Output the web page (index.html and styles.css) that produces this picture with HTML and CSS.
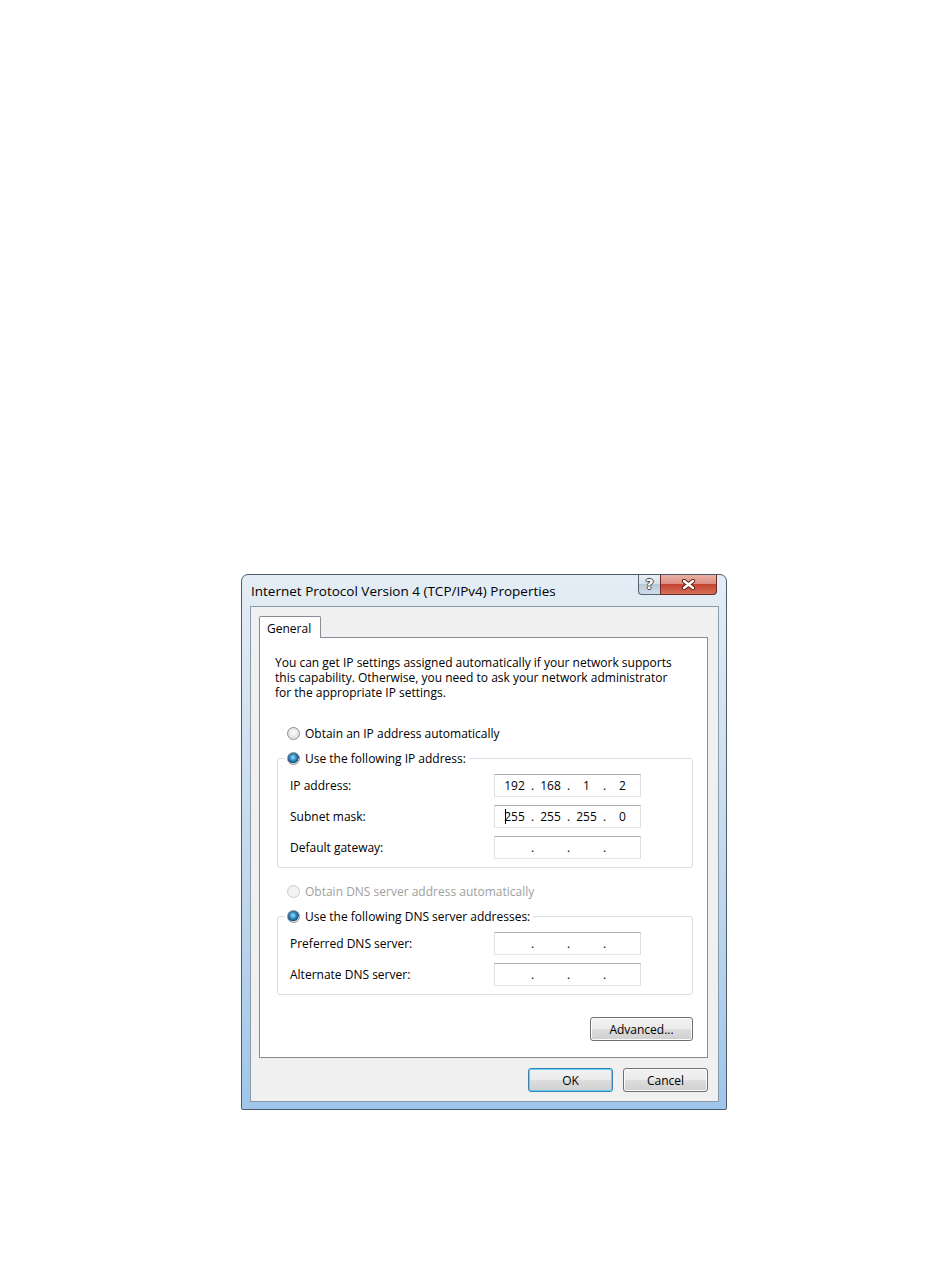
FILE: index.html
```html
<!DOCTYPE html>
<html lang="en">
<head>
    <meta charset="UTF-8">
    <title>Internet Protocol Version 4 (TCP/IPv4) Properties</title>
    <link rel="stylesheet" href="styles.css">
</head>
<body>
    <div class="window">
        <div class="titlebar">
            <span class="title">Internet Protocol Version 4 (TCP/IPv4) Properties</span>
            <div class="caption-buttons">
                <span class="cap-btn help">?</span>
                <span class="cap-btn close">
                    <svg width="15" height="11" viewBox="0 0 15 11">
                        <path d="M3 2 L12 9 M12 2 L3 9" stroke="#5a1d16" stroke-width="4.2" stroke-linecap="round"/>
                        <path d="M3 2 L12 9 M12 2 L3 9" stroke="#fff" stroke-width="2.4" stroke-linecap="round"/>
                    </svg>
                </span>
            </div>
        </div>

        <div class="client">
            <div class="tabs">
                <div class="tab active">General</div>
            </div>

            <div class="panel">
                <p class="intro">You can get IP settings assigned automatically if your network supports<br>this capability. Otherwise, you need to ask your network administrator<br>for the appropriate IP settings.</p>

                <div class="radio"><span class="radio-dot"></span>Obtain an IP address automatically</div>

                <fieldset class="group">
                    <legend><span class="radio"><span class="radio-dot checked"></span>Use the following IP address:</span></legend>
                    <div class="field">
                        <span class="field-label">IP address:</span>
                        <div class="ip-box">
                            <span class="seg">192</span><span class="dot">.</span><span class="seg">168</span><span class="dot">.</span><span class="seg">1</span><span class="dot">.</span><span class="seg">2</span>
                        </div>
                    </div>
                    <div class="field">
                        <span class="field-label">Subnet mask:</span>
                        <div class="ip-box">
                            <span class="seg caret">255</span><span class="dot">.</span><span class="seg">255</span><span class="dot">.</span><span class="seg">255</span><span class="dot">.</span><span class="seg">0</span>
                        </div>
                    </div>
                    <div class="field">
                        <span class="field-label">Default gateway:</span>
                        <div class="ip-box">
                            <span class="seg"></span><span class="dot">.</span><span class="seg"></span><span class="dot">.</span><span class="seg"></span><span class="dot">.</span><span class="seg"></span>
                        </div>
                    </div>
                </fieldset>

                <div class="radio disabled"><span class="radio-dot"></span>Obtain DNS server address automatically</div>

                <fieldset class="group">
                    <legend><span class="radio"><span class="radio-dot checked"></span>Use the following DNS server addresses:</span></legend>
                    <div class="field">
                        <span class="field-label">Preferred DNS server:</span>
                        <div class="ip-box">
                            <span class="seg"></span><span class="dot">.</span><span class="seg"></span><span class="dot">.</span><span class="seg"></span><span class="dot">.</span><span class="seg"></span>
                        </div>
                    </div>
                    <div class="field">
                        <span class="field-label">Alternate DNS server:</span>
                        <div class="ip-box">
                            <span class="seg"></span><span class="dot">.</span><span class="seg"></span><span class="dot">.</span><span class="seg"></span><span class="dot">.</span><span class="seg"></span>
                        </div>
                    </div>
                </fieldset>

                <div class="panel-actions">
                    <button class="btn advanced">Advanced...</button>
                </div>
            </div>

            <div class="dialog-actions">
                <button class="btn default">OK</button>
                <button class="btn">Cancel</button>
            </div>
        </div>
    </div>
</body>
</html>
```

FILE: styles.css
```css
* {
    box-sizing: border-box;
}

body {
    margin: 0;
    background-color: #fff;
    font-family: "Open Sans", "Noto Sans", sans-serif;
    font-size: 12px;
    color: #000;
}

/* window frame */
.window {
    width: 486px;
    height: 536px;
    margin: 574px 0 0 241px;
    padding: 0 7px 7px 8px;
    border: 1px solid #4c5b6b;
    border-radius: 7px 7px 2px 2px;
    background: linear-gradient(to bottom, #e4edf5 0%, #d3e2f0 30%, #b9d3ec 70%, #9fc6ea 100%);
}

.titlebar {
    display: flex;
    height: 31px;
}

.title {
    padding: 7px 0 0 1px;
    font-size: 13.5px;
    color: #000;
}

.caption-buttons {
    display: flex;
    margin-left: auto;
    margin-right: 2px;
    height: 20px;
}

.cap-btn {
    display: flex;
    align-items: center;
    justify-content: center;
    height: 20px;
    border: 1px solid #56626f;
    border-top: none;
}

.help {
    width: 22px;
    padding-bottom: 1px;
    border-radius: 0 0 0 4px;
    border-right: none;
    background: linear-gradient(to bottom, #e9eff5 0%, #d6e0eb 45%, #b9c8d8 50%, #cfdcea 100%);
    color: #fff;
    font-family: "DejaVu Sans", sans-serif;
    font-weight: bold;
    font-size: 14px;
    line-height: 1;
    text-shadow: -1px 0 #3f4a55, 1px 0 #3f4a55, 0 -1px #3f4a55, 0 1px #3f4a55;
}

.close {
    width: 57px;
    border-radius: 0 0 4px 0;
    border-color: #6b2b22;
    background: linear-gradient(to bottom, #eab0a6 0%, #dc8f82 45%, #c5432f 50%, #d4705c 100%);
}

/* client area */
.client {
    height: 496px;
    padding: 9px 10px 9px 8px;
    border: 1px solid #8b9aa9;
    background-color: #f0f0f0;
}

.tabs {
    display: flex;
    height: 21px;
}

.tab {
    width: 62px;
    height: 22px;
    padding: 3px 0 0 7px;
    border: 1px solid #898c95;
    border-bottom: none;
    border-radius: 2px 2px 0 0;
    background-color: #fff;
    position: relative;
    z-index: 1;
}

.panel {
    height: 421px;
    padding: 17px 14px 0 15px;
    border: 1px solid #898c95;
    background-color: #fff;
}

.intro {
    margin: 0 0 25px;
    line-height: 15px;
}

/* radio buttons */
.radio {
    display: flex;
    align-items: center;
    height: 17px;
    padding-left: 12px;
    white-space: nowrap;
}

legend .radio {
    padding-left: 0;
}

.radio-dot {
    width: 13px;
    height: 13px;
    margin-right: 5px;
    border: 1px solid #8c8f93;
    border-radius: 50%;
    background: radial-gradient(circle at 50% 40%, #fdfdfd 0%, #e6e6e6 55%, #cfd1d3 100%);
    flex-shrink: 0;
}

.radio-dot.checked {
    background:
        radial-gradient(circle at 45% 40%, #9edcf7 0%, #2b83bd 40%, #0d4f80 62%, transparent 66%),
        radial-gradient(circle at 50% 40%, #fdfdfd 0%, #e6e6e6 55%, #cfd1d3 100%);
}

.radio.disabled {
    margin-top: 15px;
    color: #a0a0a0;
}

.radio.disabled .radio-dot {
    border-color: #c9cbcd;
    background: #f3f3f3;
}

/* group boxes */
.group {
    margin: 8px 0 0 2px;
    padding: 7px 10px 8px 7px;
    border: 1px solid #d5dfe5;
    border-radius: 3px;
}

.group legend {
    padding: 0 3px 0 2px;
}

.field {
    display: flex;
    align-items: center;
    height: 23px;
    padding-left: 5px;
}

.field + .field {
    margin-top: 8px;
}

.field-label {
    width: 204px;
}

.ip-box {
    display: flex;
    align-items: center;
    width: 147px;
    height: 23px;
    padding-left: 5px;
    border: 1px solid #dbdfe6;
    border-top-color: #abadb3;
    border-bottom-color: #e3e9ef;
    background-color: #fff;
}

.seg {
    width: 29px;
    text-align: center;
    position: relative;
}

.seg.caret::before {
    content: "";
    position: absolute;
    left: 5px;
    top: 1px;
    height: 15px;
    border-left: 1px solid #000;
}

.dot {
    width: 7px;
    text-align: center;
}

/* buttons */
.btn {
    height: 24px;
    padding: 0;
    border: 1px solid #707070;
    border-radius: 3px;
    background: linear-gradient(to bottom, #f2f2f2 0%, #ebebeb 48%, #dddddd 52%, #cfcfcf 100%);
    box-shadow: inset 0 0 0 1px #fbfbfb;
    font-family: inherit;
    font-size: inherit;
    color: #000;
}

.btn.default {
    border-color: #3c7fb1;
    box-shadow: inset 0 0 0 1px #5fd3f7;
}

.panel-actions {
    display: flex;
    justify-content: flex-end;
    margin-top: 22px;
}

.advanced {
    width: 103px;
}

.dialog-actions {
    display: flex;
    justify-content: flex-end;
    gap: 10px;
    margin-top: 10px;
}

.dialog-actions .btn {
    width: 85px;
}
```
